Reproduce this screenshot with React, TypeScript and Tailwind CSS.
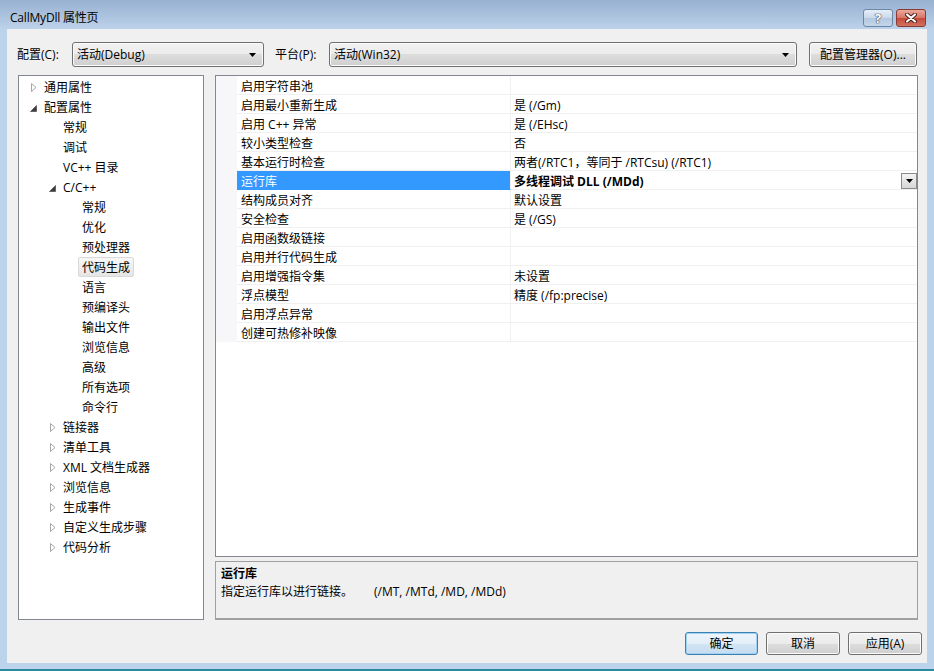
import React from "react";

type TreeItem = {
  label: string;
  level: 0 | 1 | 2;
  toggle?: "open" | "closed";
  selected?: boolean;
};

const TREE: TreeItem[] = [
  { label: "通用属性", level: 0, toggle: "closed" },
  { label: "配置属性", level: 0, toggle: "open" },
  { label: "常规", level: 1 },
  { label: "调试", level: 1 },
  { label: "VC++ 目录", level: 1 },
  { label: "C/C++", level: 1, toggle: "open" },
  { label: "常规", level: 2 },
  { label: "优化", level: 2 },
  { label: "预处理器", level: 2 },
  { label: "代码生成", level: 2, selected: true },
  { label: "语言", level: 2 },
  { label: "预编译头", level: 2 },
  { label: "输出文件", level: 2 },
  { label: "浏览信息", level: 2 },
  { label: "高级", level: 2 },
  { label: "所有选项", level: 2 },
  { label: "命令行", level: 2 },
  { label: "链接器", level: 1, toggle: "closed" },
  { label: "清单工具", level: 1, toggle: "closed" },
  { label: "XML 文档生成器", level: 1, toggle: "closed" },
  { label: "浏览信息", level: 1, toggle: "closed" },
  { label: "生成事件", level: 1, toggle: "closed" },
  { label: "自定义生成步骤", level: 1, toggle: "closed" },
  { label: "代码分析", level: 1, toggle: "closed" },
];

const INDENT = ["pl-[10px]", "pl-[29px]", "pl-[48px]"];

const PROPS: { name: string; value: string; selected?: boolean }[] = [
  { name: "启用字符串池", value: "" },
  { name: "启用最小重新生成", value: "是 (/Gm)" },
  { name: "启用 C++ 异常", value: "是 (/EHsc)" },
  { name: "较小类型检查", value: "否" },
  { name: "基本运行时检查", value: "两者(/RTC1，等同于 /RTCsu) (/RTC1)" },
  { name: "运行库", value: "多线程调试 DLL (/MDd)", selected: true },
  { name: "结构成员对齐", value: "默认设置" },
  { name: "安全检查", value: "是 (/GS)" },
  { name: "启用函数级链接", value: "" },
  { name: "启用并行代码生成", value: "" },
  { name: "启用增强指令集", value: "未设置" },
  { name: "浮点模型", value: "精度 (/fp:precise)" },
  { name: "启用浮点异常", value: "" },
  { name: "创建可热修补映像", value: "" },
];

const BTN =
  "rounded-[3px] border border-[#707070] bg-[linear-gradient(#f2f2f2,#ebebeb_50%,#dddddd_50%,#cfcfcf)] shadow-[inset_0_0_0_1px_#fbfbfb]";

function DownArrow() {
  return (
    <svg width="7" height="4" viewBox="0 0 7 4">
      <polygon points="0,0 7,0 3.5,4" fill="#000" />
    </svg>
  );
}

function Toggle({ kind }: { kind?: "open" | "closed" }) {
  if (kind === "closed")
    return (
      <svg width="6" height="9" viewBox="0 0 6 9" className="ml-[2px]">
        <polygon points="0.5,0.5 5,4.5 0.5,8.5" fill="#fff" stroke="#a6a6a6" strokeWidth="1" />
      </svg>
    );
  if (kind === "open")
    return (
      <svg width="7" height="7" viewBox="0 0 7 7" className="ml-[1px] mt-[2px]">
        <polygon points="6.5,0.5 6.5,6.5 0.5,6.5" fill="#3c3c3c" stroke="#3c3c3c" strokeWidth="0.6" />
      </svg>
    );
  return null;
}

function Combo({ text, className }: { text: string; className: string }) {
  return (
    <div className={`${BTN} flex h-[25px] items-center pl-[4px] pr-[7px] ${className}`}>
      <span className="flex-1">{text}</span>
      <DownArrow />
    </div>
  );
}

export default function App() {
  return (
    <div className="relative h-[671px] w-[934px] overflow-hidden bg-[#bcd3ec] font-['Open_Sans','Noto_Sans_CJK_SC',sans-serif] text-[12px] leading-[16px] text-black">
      {/* title bar */}
      <div className="flex h-[29px] items-start bg-linear-to-b from-[#97b1d1] to-[#bdd2ea] pr-[8px] pt-[9px]">
        <span className="ml-[10px] mt-[1px] text-[12px] tracking-[-0.2px]">CallMyDll 属性页</span>
        <div className="ml-auto flex gap-[3px]">
          <div className="flex h-[18px] w-[30px] items-center justify-center rounded-[3px] border border-[#6d86a8] bg-[linear-gradient(#e6eef8,#c9d8ea_50%,#b3c7df_50%,#c5d6ea)]">
            <span className="text-[13px] font-bold leading-none text-white [text-shadow:0_0_1px_#2c3e57,0_0_1px_#2c3e57,0_0_1px_#2c3e57]">?</span>
          </div>
          <div className="flex h-[18px] w-[30px] items-center justify-center rounded-[3px] border border-[#8a3a33] bg-[linear-gradient(#e9a99c,#d67565_50%,#c6483a_50%,#d3725f)]">
            <svg width="12" height="10" viewBox="0 0 12 10">
              <path d="M2 1.5 L10 8.5 M10 1.5 L2 8.5" stroke="#4a1914" strokeWidth="4" strokeLinecap="round" />
              <path d="M2 1.5 L10 8.5 M10 1.5 L2 8.5" stroke="#fff" strokeWidth="2.2" strokeLinecap="round" />
            </svg>
          </div>
        </div>
      </div>

      {/* client area */}
      <div className="mx-[7px] flex h-[634px] w-[920px] flex-col bg-[#f0f0f0]">
        {/* toolbar */}
        <div className="mt-[13px] flex h-[25px] items-center">
          <span className="ml-[10px] w-[55px]">配置(C):</span>
          <Combo text="活动(Debug)" className="w-[192px]" />
          <span className="ml-[11px] w-[54px]">平台(P):</span>
          <Combo text="活动(Win32)" className="w-[468px]" />
          <div className={`${BTN} ml-[12px] flex h-[25px] w-[108px] items-center justify-center`}>
            配置管理器(O)...
          </div>
        </div>

        {/* panels */}
        <div className="mt-[8px] flex h-[545px]">
          {/* tree */}
          <div className="ml-[11px] h-full w-[186px] border border-[#828790] bg-white pt-[1px]">
            {TREE.map((it, i) => (
              <div key={i} className={`flex h-[20px] items-center ${INDENT[it.level]}`}>
                <span className="flex w-[15px] items-center">
                  <Toggle kind={it.toggle} />
                </span>
                {it.selected ? (
                  <span className="-ml-[4px] flex h-[20px] items-center rounded-[2px] border border-[#d9d9d9] bg-linear-to-b from-[#f8f8f8] to-[#e5e5e5] px-[3px] pt-[1px]">
                    {it.label}
                  </span>
                ) : (
                  <span className="pt-[1px]">{it.label}</span>
                )}
              </div>
            ))}
          </div>

          {/* right column */}
          <div className="ml-[11px] flex h-full w-[703px] flex-col">
            <div className="h-[482px] border border-[#828790] bg-white">
              {PROPS.map((p, i) => (
                <div key={i} className="flex h-[19px]">
                  <div className="w-[21px] bg-[#f7f7f9]" />
                  <div
                    className={`w-[274px] border-r border-b pl-[4px] pt-[3px] ${
                      p.selected
                        ? "border-r-[#f0f0f0] border-b-[#3399ff] bg-[#3399ff] text-white"
                        : "border-[#f0f0f0]"
                    }`}
                  >
                    {p.name}
                  </div>
                  <div className="flex flex-1 items-start border-b border-[#f0f0f0] pl-[3px]">
                    <span className={`pt-[3px] ${p.selected ? "font-bold" : ""}`}>{p.value}</span>
                    {p.selected && (
                      <div className="ml-auto mt-[2px] flex h-[16px] w-[16px] items-center justify-center border border-[#8a8a8a] bg-linear-to-b from-[#f4f4f4] to-[#d6d6d6]">
                        <DownArrow />
                      </div>
                    )}
                  </div>
                </div>
              ))}
            </div>
            <div className="mt-[4px] h-[59px] border border-b-2 border-[#a0a0a0] bg-[#f0f0f0] px-[5px] pt-[3px]">
              <div className="font-bold leading-[18px]">运行库</div>
              <div className="leading-[18px]">
                指定运行库以进行链接。
                <span className="ml-[21px]">(/MT, /MTd, /MD, /MDd)</span>
              </div>
            </div>
          </div>
        </div>

        {/* bottom buttons */}
        <div className="mt-[12px] flex h-[23px] justify-end gap-[8px] pr-[5px]">
          <div className="flex w-[73px] items-center justify-center rounded-[3px] border border-[#3c7fb1] bg-[linear-gradient(#eef5fb,#e3eef8_50%,#d3e5f4_50%,#c4dcf0)] shadow-[inset_0_0_0_1px_#9fd2f3]">
            确定
          </div>
          <div className={`${BTN} flex w-[74px] items-center justify-center`}>取消</div>
          <div className={`${BTN} flex w-[74px] items-center justify-center`}>应用(A)</div>
        </div>
      </div>

      {/* bottom frame edge */}
      <div className="absolute bottom-0 left-0 h-[2px] w-full bg-[#2b8aa0]" />
    </div>
  );
}
